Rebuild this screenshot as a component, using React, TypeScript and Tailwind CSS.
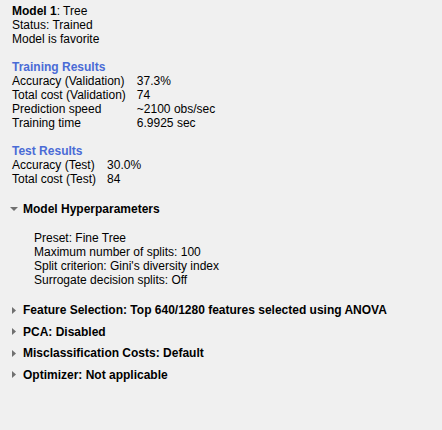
import React from "react";

type Row = { label: string; value: string };

const trainingRows: Row[] = [
  { label: "Accuracy (Validation)", value: "37.3%" },
  { label: "Total cost (Validation)", value: "74" },
  { label: "Prediction speed", value: "~2100 obs/sec" },
  { label: "Training time", value: "6.9925 sec" },
];

const testRows: Row[] = [
  { label: "Accuracy (Test)", value: "30.0%" },
  { label: "Total cost (Test)", value: "84" },
];

const hyperparameters = [
  "Preset: Fine Tree",
  "Maximum number of splits: 100",
  "Split criterion: Gini's diversity index",
  "Surrogate decision splits: Off",
];

const collapsed = [
  "Feature Selection: Top 640/1280 features selected using ANOVA",
  "PCA: Disabled",
  "Misclassification Costs: Default",
  "Optimizer: Not applicable",
];

const ResultTable = ({ rows }: { rows: Row[] }) => (
  <div className="grid w-fit grid-cols-[auto_auto] gap-x-[11px]">
    {rows.map((row) => (
      <React.Fragment key={row.label}>
        <span>{row.label}</span>
        <span>{row.value}</span>
      </React.Fragment>
    ))}
  </div>
);

const DownArrow = () => (
  <svg width="8" height="4" viewBox="0 0 8 4" className="mr-[5px] ml-[10px]">
    <polygon points="0,0 8,0 4,4" fill="#707070" />
  </svg>
);

const RightArrow = () => (
  <svg width="4" height="7" viewBox="0 0 4 7" className="mr-[7px] ml-[12px]">
    <polygon points="0,0 4,3.5 0,7" fill="#707070" />
  </svg>
);

export default function App() {
  return (
    <div
      className="h-[430px] w-[442px] bg-[#f0f0f0] text-[12px] leading-[14px] text-black"
      style={{ fontFamily: '"Liberation Sans", Arial, sans-serif' }}
    >
      <div className="pl-3 pt-[4px]">
        <p>
          <b>Model 1</b>: Tree
        </p>
        <p>Status: Trained</p>
        <p>Model is favorite</p>

        <p className="mt-[14px] font-bold text-[#4a6bd6]">Training Results</p>
        <ResultTable rows={trainingRows} />

        <p className="mt-[14px] font-bold text-[#4a6bd6]">Test Results</p>
        <ResultTable rows={testRows} />
      </div>

      <div className="mt-[16px] flex items-center font-bold">
        <DownArrow />
        <span>Model Hyperparameters</span>
      </div>

      <div className="mt-[15px] pl-[34px]">
        {hyperparameters.map((line) => (
          <p key={line}>{line}</p>
        ))}
      </div>

      <div className="mt-[16px]">
        {collapsed.map((item) => (
          <div key={item} className="flex h-[21.67px] items-start font-bold">
            <div className="flex h-[14px] items-center">
              <RightArrow />
            </div>
            <span>{item}</span>
          </div>
        ))}
      </div>
    </div>
  );
}
